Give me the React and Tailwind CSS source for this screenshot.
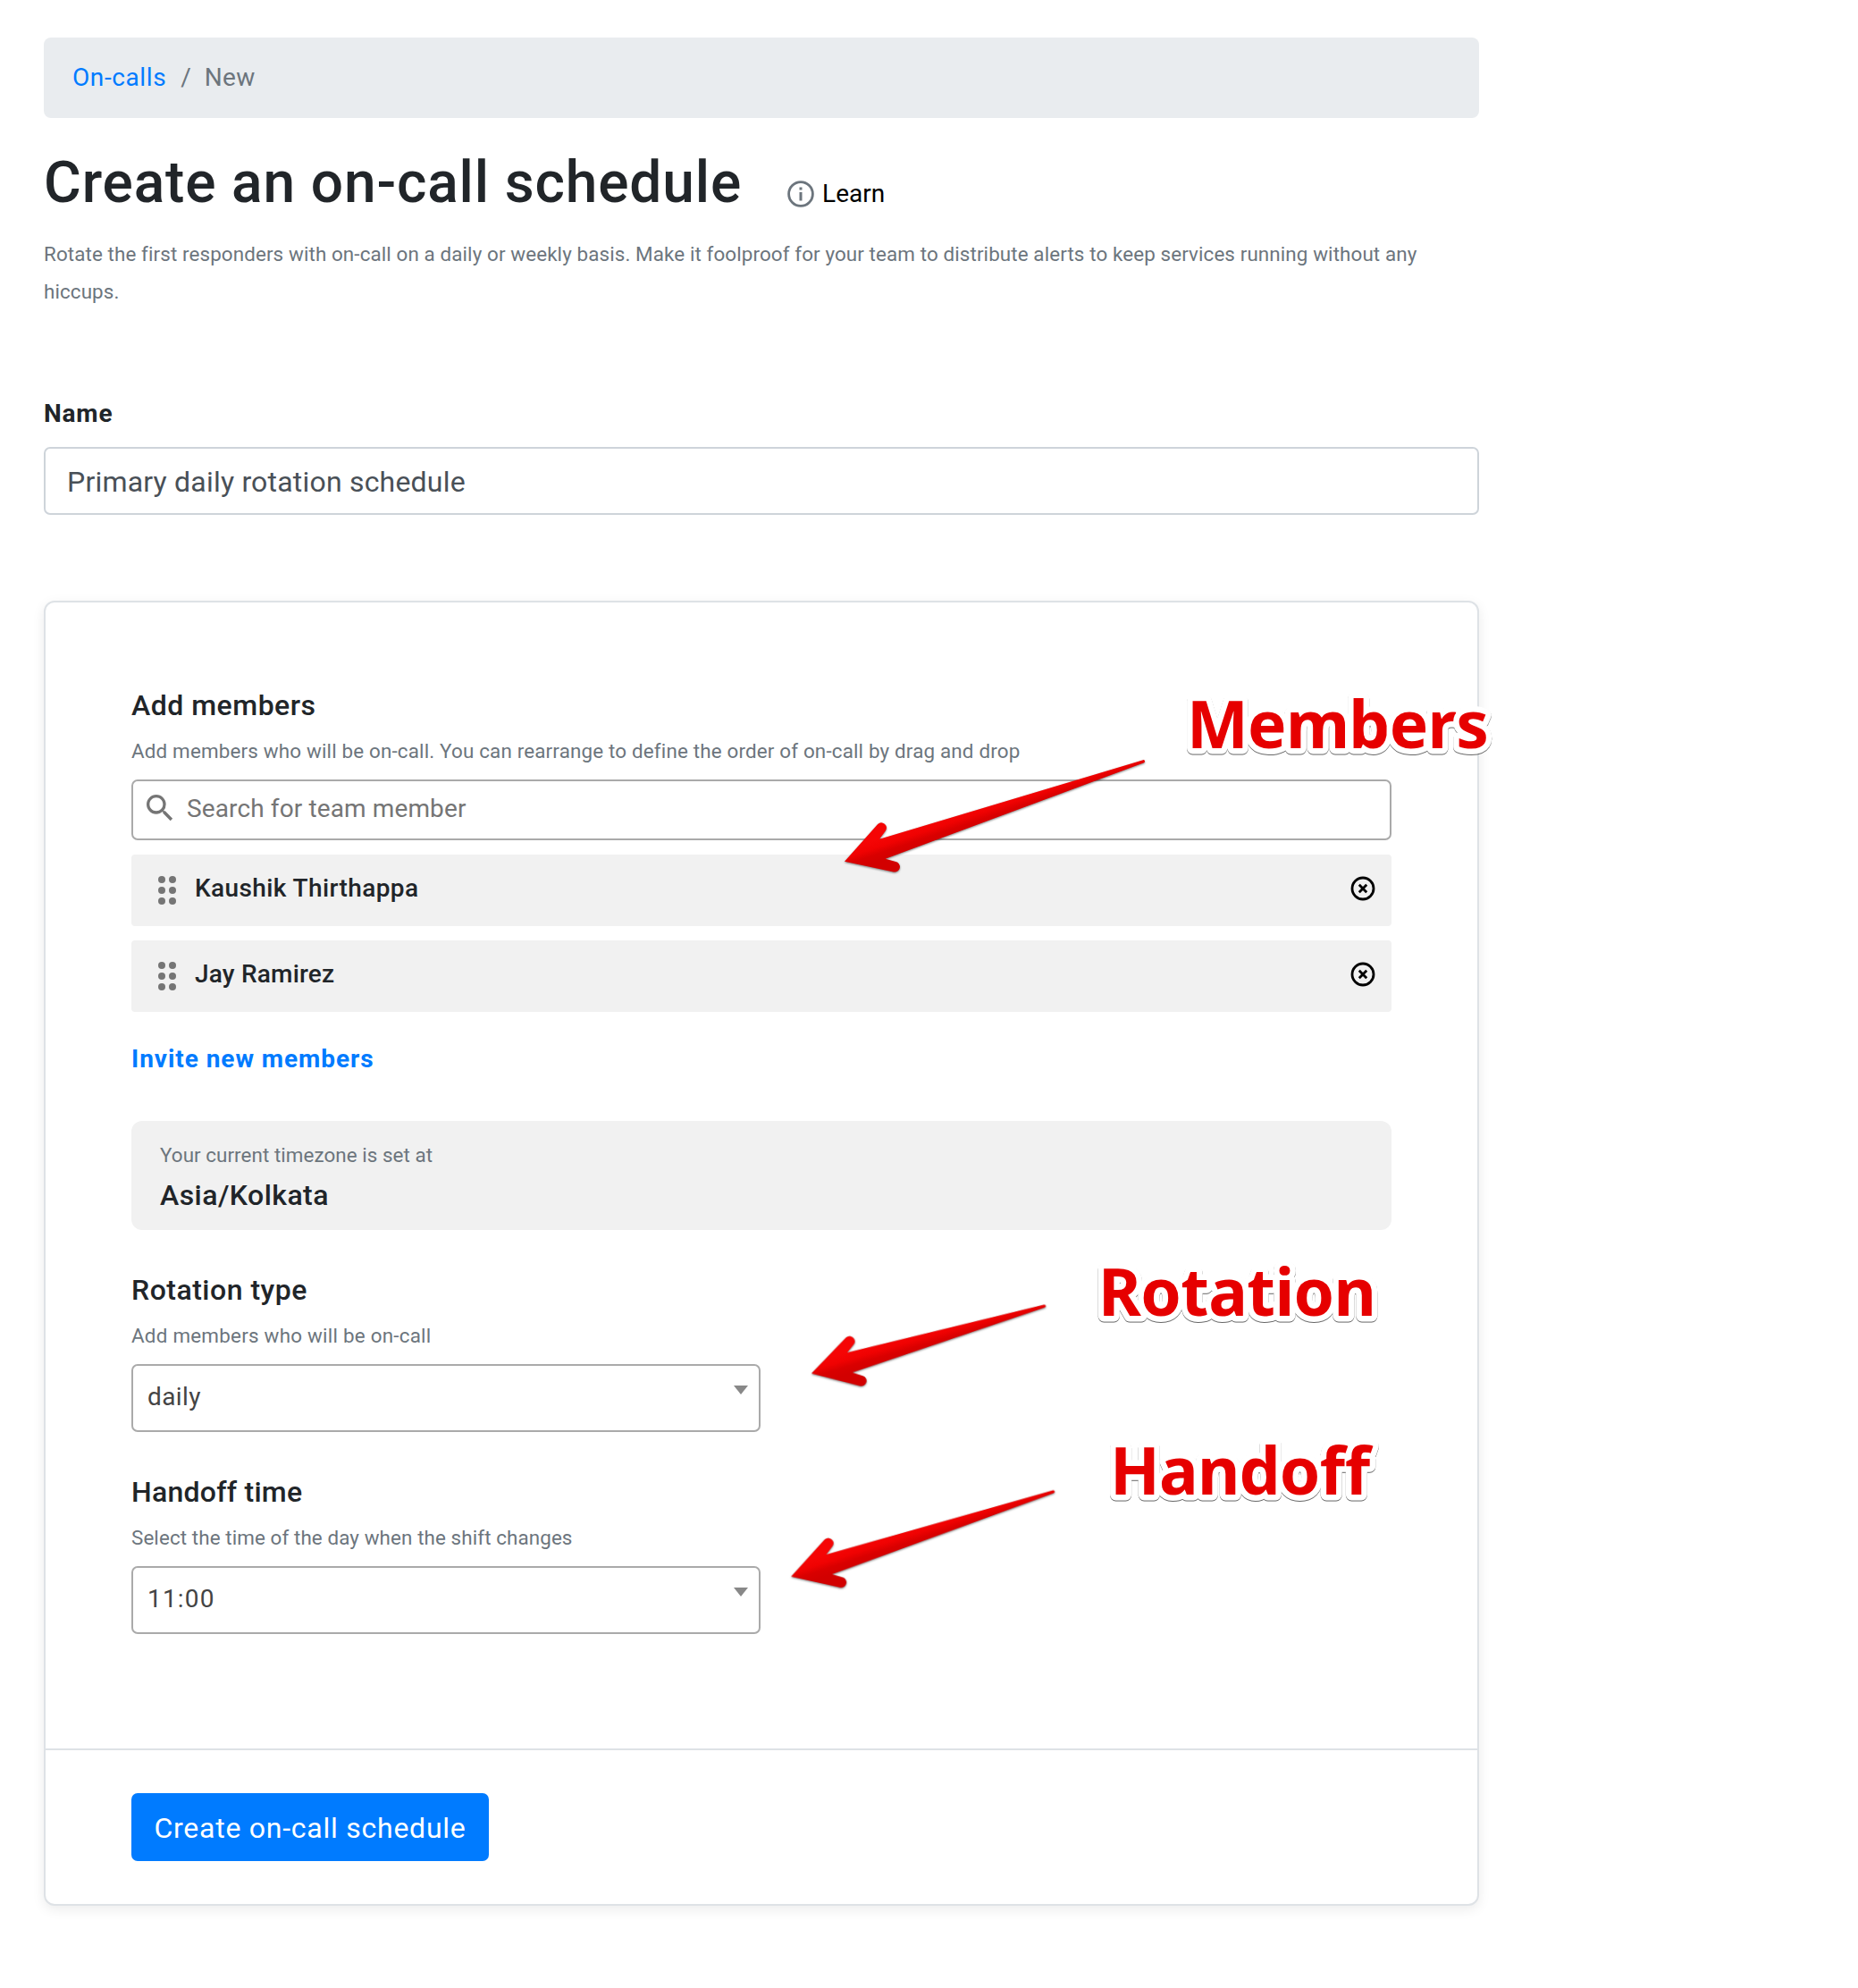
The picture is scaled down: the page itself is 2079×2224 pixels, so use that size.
import React from "react";
import { MdSearch } from "react-icons/md";

function InfoIcon() {
  return (
    <svg viewBox="0 0 30 30" className="size-[30px]" fill="none" stroke="#6c757d" strokeWidth="2.8">
      <circle cx="15" cy="15" r="13.4" />
      <path d="M15 13v9.4M15 7.6v2.8" strokeWidth="3" />
    </svg>
  );
}

function RemoveIcon() {
  return (
    <svg viewBox="0 0 28 28" className="size-7" fill="none" stroke="#000" strokeWidth="2.8">
      <circle cx="14" cy="14" r="12" />
      <path d="M9.8 9.8l8.4 8.4M18.2 9.8l-8.4 8.4" />
    </svg>
  );
}

function MemberRow({ name, tracking }) {
  return (
    <li className="mt-4 flex h-20 items-center rounded bg-[#f1f1f1] pl-[30px] pr-[18px]">
      <svg viewBox="0 0 20 32" className="h-8 w-5 shrink-0" fill="#757575">
        {[4, 16, 28].map((y) => (
          <g key={y}>
            <circle cx="4" cy={y} r="4" />
            <circle cx="16" cy={y} r="4" />
          </g>
        ))}
      </svg>
      <span className={`ml-[21px] flex-1 pb-1 text-[28px] font-medium leading-10 ${tracking}`}>{name}</span>
      <span className="pb-1">
        <RemoveIcon />
      </span>
    </li>
  );
}

function SelectField({ title, titleClass, hint, hintClass, value, valueClass }) {
  return (
    <div className="mt-12">
      <h2 className={`text-[32px] font-medium leading-[38px] ${titleClass}`}>{title}</h2>
      <p className={`mt-4 text-[22.4px] leading-8 text-[#6c757d] ${hintClass}`}>{hint}</p>
      <div className="mt-4 flex h-[76px] w-[704px] items-start justify-between rounded-[7px] border-2 border-[#aaa] bg-white pl-4 pr-3 pt-[14px]">
        <span className={`text-[28px] leading-[42px] text-[#444] ${valueClass}`}>{value}</span>
        <svg viewBox="0 0 16 10" className="mt-2 h-[10px] w-4" fill="#888">
          <path d="M0 0h16L8 10z" />
        </svg>
      </div>
    </div>
  );
}

/* Tapered annotation arrow; the tip sits at (x, y) and the tail runs up and to the right. */
function Arrow({ x, y, length, turn }) {
  const tx = length * 0.948;
  const ty = -length * 0.317;
  const d = `M0 0L37.2 -41.9A5.8 5.8 0 0 1 45.9 -34.4L39 -25L${tx - 1} ${ty - 1.6}A1.6 1.6 0 0 1 ${tx} ${ty + 1.4}L45.7 -3.1L57.2 0.3A5.8 5.8 0 0 1 55 11.7Z`;
  return (
    <g transform={`translate(${x} ${y}) rotate(${turn})`}>
      <path d={d} fill="url(#arrowRed)" />
    </g>
  );
}

/* Red caption with a rounded white outline; x and y give the start of its baseline. */
function Callout({ x, y, width, children }) {
  return (
    <text
      x={x}
      y={y}
      textLength={width}
      className="fill-[#e60000] stroke-white stroke-[13px] font-['Noto_Sans','Open_Sans',sans-serif] text-[73px] font-bold [filter:drop-shadow(0_1.5px_0.6px_rgba(0,0,0,0.6))] [paint-order:stroke_fill] [stroke-linejoin:round]"
    >
      {children}
    </text>
  );
}

export default function App() {
  return (
    <div className="relative min-h-[2224px] w-[2079px] overflow-hidden bg-white pl-[49px] pt-[42px] font-['Roboto',sans-serif] text-[#212529]">
      <main className="w-[1606px]">
        <nav className="flex h-[90px] items-center rounded-lg bg-[#e9ecef] pl-8 text-[28px] leading-[42px]">
          <a className="tracking-[0.6px] text-[#007bff]">On-calls</a>
          <span className="ml-4 text-[#6c757d]">/</span>
          <span className="ml-[15px] tracking-[0.3px] text-[#6c757d]">New</span>
        </nav>

        <header className="mt-[35px] flex items-end">
          <h1 className="text-[64px] font-medium leading-[76px] tracking-[0.86px]">Create an on-call schedule</h1>
          <a className="mb-[6px] ml-[51px] flex items-center text-[28px] leading-10 text-black">
            <InfoIcon />
            <span className="ml-[9px]">Learn</span>
          </a>
        </header>
        <p className="mt-5 text-[22.4px] leading-[42px] tracking-[0.11px] text-[#6c757d]">
          Rotate the first responders with on-call on a daily or weekly basis. Make it foolproof for your team to distribute alerts to keep services running without any
          <br />
          hiccups.
        </p>

        <label className="mt-[95px] block text-[28px] font-bold leading-[42px] tracking-[0.8px]">Name</label>
        <div className="mt-4 flex h-[76px] items-center rounded-[7px] border-2 border-[#ced4da] pl-6 pt-px text-[32px] leading-[48px] tracking-[0.2px] text-[#495057]">
          Primary daily rotation schedule
        </div>

        <section className="mt-24 rounded-xl border-2 border-[#dee2e6] bg-white shadow-[0_4px_14px_rgba(0,0,0,0.08)]">
          <div className="px-24 pb-32 pt-24">
            <h2 className="text-[32px] font-medium leading-[38px] tracking-[0.5px]">Add members</h2>
            <p className="mt-4 text-[22.4px] leading-8 tracking-[0.17px] text-[#6c757d]">
              Add members who will be on-call. You can rearrange to define the order of on-call by drag and drop
            </p>
            <div className="mt-4 flex h-[68px] items-center rounded-[7px] border-2 border-[#aaa] bg-white pb-1 pl-[10px]">
              <MdSearch className="size-10 text-[#757575]" />
              <span className="ml-[10px] pt-px text-[28px] leading-10 tracking-[0.12px] text-[#757575]">Search for team member</span>
            </div>
            <ul>
              <MemberRow name="Kaushik Thirthappa" tracking="tracking-[0.4px]" />
              <MemberRow name="Jay Ramirez" tracking="tracking-[0.2px]" />
            </ul>
            <a className="mt-8 block text-[28px] font-bold leading-[42px] tracking-[0.95px] text-[#007bff]">Invite new members</a>

            <div className="mt-12 h-[122px] rounded-xl bg-[#f1f1f1] pl-8 pt-[22px]">
              <p className="text-[22.4px] leading-8 tracking-[0.06px] text-[#6c757d]">Your current timezone is set at</p>
              <p className="mt-[9px] text-[32px] font-medium leading-10 tracking-[0.45px]">Asia/Kolkata</p>
            </div>

            <SelectField
              title="Rotation type"
              titleClass="tracking-[0.5px]"
              hint="Add members who will be on-call"
              hintClass="tracking-[0.24px]"
              value="daily"
              valueClass="tracking-[0.4px]"
            />
            <SelectField
              title="Handoff time"
              titleClass="tracking-[0.25px]"
              hint="Select the time of the day when the shift changes"
              hintClass="tracking-[0.1px]"
              value="11:00"
              valueClass="tracking-[1.2px]"
            />
          </div>
          <footer className="border-t-2 border-[#dee2e6] px-24 py-12">
            <button className="flex h-[76px] w-[400px] items-center justify-center rounded-[7px] bg-[#007bff] pt-px text-[32px] leading-[48px] tracking-[0.75px] text-white">
              Create on-call schedule
            </button>
          </footer>
        </section>
      </main>

      <svg viewBox="0 0 2079 2224" className="pointer-events-none absolute left-0 top-0 h-[2224px] w-[2079px]">
        <defs>
          <linearGradient id="arrowRed" gradientUnits="userSpaceOnUse" x1="-3.8" y1="-11.4" x2="3.8" y2="11.4">
            <stop offset="0" stopColor="#f50505" />
            <stop offset="0.35" stopColor="#f00202" />
            <stop offset="0.65" stopColor="#d90000" />
            <stop offset="1" stopColor="#d20000" />
          </linearGradient>
        </defs>
        <g className="[filter:drop-shadow(0_1px_1px_rgba(0,0,0,0.5))]">
          <Arrow x={945} y={963.8} length={353.5} turn={0} />
          <Arrow x={908} y={1536.5} length={272} turn={2.4} />
          <Arrow x={885.3} y={1763.7} length={309} turn={0.6} />
        </g>
        <Callout x={1328} y={837} width={338}>Members</Callout>
        <Callout x={1229} y={1472} width={311}>Rotation</Callout>
        <Callout x={1242} y={1672} width={291}>Handoff</Callout>
      </svg>
    </div>
  );
}
